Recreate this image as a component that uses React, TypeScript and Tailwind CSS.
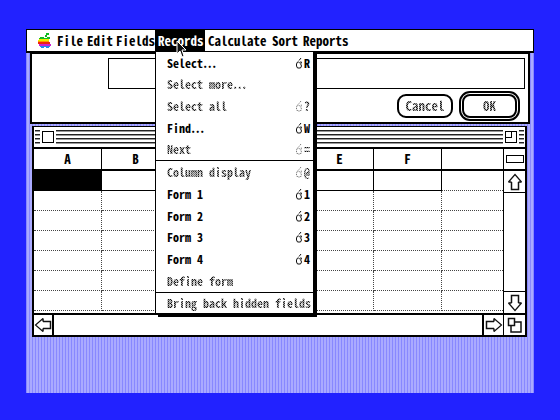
import type { ReactNode } from "react";

type Item = { label: string; shortcut?: string; disabled?: boolean };

const groups: { height: string; items: Item[] }[] = [
  {
    height: "h-[108px]",
    items: [
      { label: "Select…", shortcut: "R" },
      { label: "Select more…", disabled: true },
      { label: "Select all", shortcut: "?", disabled: true },
      { label: "Find…", shortcut: "W" },
      { label: "Next", shortcut: "=", disabled: true },
    ],
  },
  {
    height: "h-[132px]",
    items: [
      { label: "Column display", shortcut: "@", disabled: true },
      { label: "Form 1", shortcut: "1" },
      { label: "Form 2", shortcut: "2" },
      { label: "Form 3", shortcut: "3" },
      { label: "Form 4", shortcut: "4" },
      { label: "Define form", disabled: true },
    ],
  },
  { height: "h-[21px]", items: [{ label: "Bring back hidden fields", disabled: true }] },
];

const dither = "bg-[repeating-conic-gradient(#111_0_25%,#999_0_50%)] bg-[length:2px_2px] bg-clip-text text-transparent";

function AppleLogo() {
  return (
    <svg className="h-4 w-[14px]" viewBox="0 0 14 16" shapeRendering="crispEdges">
      <path fill="#11bb22" d="M8 0h3v2H9v2H7V2h1zM2 4h4v1h3V4h3v2H1V5h1z" />
      <path fill="#eeee00" d="M1 6h10v2H0V7h1z" />
      <path fill="#ff9900" d="M0 8h11v1H0z" />
      <path fill="#ee2211" d="M0 9h12v2H0z" />
      <path fill="#cc22cc" d="M1 11h12v2H1z" />
      <path fill="#2288ee" d="M2 13h10v1h-1v1H8v-1H6v1H3v-1H2z" />
    </svg>
  );
}

function OpenApple({ disabled }: { disabled?: boolean }) {
  return (
    <svg className="h-3 w-[7px] shrink-0" viewBox="0 0 7 12" fill="none" stroke={disabled ? "#555" : "#111"}>
      <path strokeDasharray={disabled ? "1 1" : undefined} d="M3 3.500L5 1M1.500 5h1l1 .7 1-.7h1l-.8 2 .8 2-1 2h-3l-1-2V7z" />
    </svg>
  );
}

function MenuTitle({ width, children }: { width: string; children: ReactNode }) {
  return <button className={`${width} h-full whitespace-nowrap text-left`}>{children}</button>;
}

function RecordsMenu() {
  return (
    <div role="menu" className="absolute left-0 top-full z-10 w-[159px] border border-black bg-white text-xs text-black shadow-[3px_3px_0_#000]">
      {groups.map((group, i) => (
        <div key={i} className={`${group.height} flex flex-col ${i > 0 ? "border-t border-black" : ""}`}>
          {group.items.map((item) => (
            <button
              key={item.label}
              role="menuitem"
              disabled={item.disabled}
              className="flex min-h-0 flex-1 items-center justify-between pl-[11px] pr-0.5 text-left leading-4"
            >
              <span className={`whitespace-nowrap ${item.disabled ? dither : ""}`}>{item.label}</span>
              {item.shortcut && (
                <span className="flex w-[15px] shrink-0 items-center gap-px">
                  <OpenApple disabled={item.disabled} />
                  <span className={item.disabled ? dither : ""}>{item.shortcut}</span>
                </span>
              )}
            </button>
          ))}
        </div>
      ))}
    </div>
  );
}

function Pointer() {
  return (
    <svg className="absolute left-[21px] top-[10px] z-20 h-[18px] w-[11px]" viewBox="0 0 11 18">
      <path d="M1 1v13l3-3 2 6 2-1-2-6h4z" fill="#111" stroke="#fff" />
    </svg>
  );
}

function MenuBar() {
  return (
    <nav className="flex h-6 items-stretch border border-b-2 border-black bg-white pl-[11px] text-[13px]">
      <button aria-label="Apple" className="flex w-[19px] items-center">
        <AppleLogo />
      </button>
      <MenuTitle width="w-[30px]">File</MenuTitle>
      <MenuTitle width="w-[29px]">Edit</MenuTitle>
      <MenuTitle width="w-[39px]">Fields</MenuTitle>
      <div className="relative w-[50px]">
        <button className="h-full w-full bg-black pl-[3px] text-left text-white">Records</button>
        <RecordsMenu />
        <Pointer />
      </div>
      <div className="w-[3px]" />
      <MenuTitle width="w-16">Calculate</MenuTitle>
      <MenuTitle width="w-[31px]">Sort</MenuTitle>
      <MenuTitle width="w-14">Reports</MenuTitle>
    </nav>
  );
}

function EntryPanel() {
  return (
    <section className="mx-1 h-[71px] border-2 border-t border-black bg-white pl-[76px] pr-[3px] pt-1">
      <input aria-label="Entry" className="block h-[31px] w-full border border-black bg-white px-2 outline-none" />
      <div className="flex items-center justify-end gap-[6px] pr-[5px] pt-[2px]">
        <button className="h-6 w-14 rounded-[9px] border-2 border-black">
          <span className={dither}>Cancel</span>
        </button>
        <button className="h-[30px] w-[61px] rounded-[11px] border-2 border-black p-px">
          <span className="flex h-full items-center justify-center rounded-[8px] border-2 border-black">
            <span className={dither}>OK</span>
          </span>
        </button>
      </div>
    </section>
  );
}

function TitleBar() {
  const lines = "h-[14px] bg-[repeating-linear-gradient(#222_0_1px,#999_1px_2px,#fff_2px_4px)]";
  return (
    <header className="flex h-5 items-center gap-[2px] px-px">
      <div className={`${lines} w-[5px]`} />
      <button aria-label="Close" className="size-3 border border-black bg-white" />
      <div className={`${lines} flex-1`} />
      <button aria-label="Zoom" className="flex size-3 items-start border border-black bg-white">
        <span className="size-[6px] border-b border-r border-black" />
      </button>
      <div className={`${lines} w-[5px]`} />
    </header>
  );
}

function Arrow({ turn }: { turn: string }) {
  return (
    <svg className={`size-[18px] ${turn}`} viewBox="0 0 18 18" fill="none" stroke="#111">
      <path strokeWidth="1.500" d="M5.500 9v7.500h7V9M5.500 9H2.500M12.500 9h3" />
      <path strokeWidth="1.200" d="M2.500 9L9 1.500 15.500 9" />
    </svg>
  );
}

function Grid() {
  const rows = Array.from({ length: 7 }, (_, i) => i);
  const columns = ["A", "B", "C", "D", "E", "F", ""];
  return (
    <table className="w-full table-fixed border-separate border-spacing-0">
      <colgroup>
        {columns.map((name) => (
          <col key={name} className={name ? "w-[14.5%]" : ""} />
        ))}
      </colgroup>
      <thead>
        <tr>
          {columns.map((name) => (
            <th key={name} className="h-[22px] border-b-2 border-r border-black p-0 font-bold leading-5 last:border-r-0">
              {name}
            </th>
          ))}
        </tr>
      </thead>
      <tbody>
        {rows.map((row) => (
          <tr key={row}>
            {columns.map((name) => (
              <td
                key={name}
                className={`h-5 border-b border-r p-0 last:border-r-0 ${
                  row === 0 && name ? "border-black" : "border-dotted border-[#444]"
                } ${row === 0 && name === "A" ? "bg-black" : ""}`}
              />
            ))}
          </tr>
        ))}
      </tbody>
    </table>
  );
}

function SheetWindow() {
  return (
    <main className="ml-[6px] mr-[7px] mt-[2px] border-2 border-t border-black bg-white">
      <TitleBar />
      <div className="flex border-t-2 border-black">
        <div className="min-w-0 flex-1 pb-[2px]">
          <Grid />
        </div>
        <div className="flex w-[22px] flex-col items-center border-l border-black">
          <div className="flex h-[22px] w-full items-center justify-center border-b-2 border-black">
            <button aria-label="Split" className="h-2 w-[18px] border border-black" />
          </div>
          <button aria-label="Scroll up" className="flex h-[22px] w-full items-center justify-center border-b border-black">
            <Arrow turn="" />
          </button>
          <div className="flex-1" />
          <button aria-label="Scroll down" className="flex h-[22px] w-full items-center justify-center border-t border-black">
            <Arrow turn="rotate-180" />
          </button>
        </div>
      </div>
      <div className="flex h-[22px] border-t-2 border-black">
        <button aria-label="Scroll left" className="flex w-5 items-center justify-center border-r-2 border-black">
          <Arrow turn="-rotate-90" />
        </button>
        <div className="flex-1" />
        <button aria-label="Scroll right" className="flex w-[21px] items-center justify-center border-l-2 border-black">
          <Arrow turn="rotate-90" />
        </button>
        <button aria-label="Resize" className="flex w-[22px] items-center justify-center border-l border-black">
          <svg className="size-4" viewBox="0 0 16 16" fill="#fff" stroke="#111" strokeWidth="1.500">
            <path d="M4 5h10v10H4z" />
            <path d="M1.500 1.500h6v7h-6z" />
          </svg>
        </button>
      </div>
    </main>
  );
}

export default function App() {
  return (
    <div className="flex min-h-screen flex-col bg-[#2222ff] px-[26px] pb-[27px] pt-[29px] font-['Noto_Sans_Mono_CJK_JP','Liberation_Mono',monospace] text-[13px] font-bold leading-5 text-black">
      <MenuBar />
      <div className="flex-1 bg-[repeating-linear-gradient(90deg,#8888ff_0_1px,#aaaaff_1px_3px)]">
        <EntryPanel />
        <SheetWindow />
      </div>
    </div>
  );
}
